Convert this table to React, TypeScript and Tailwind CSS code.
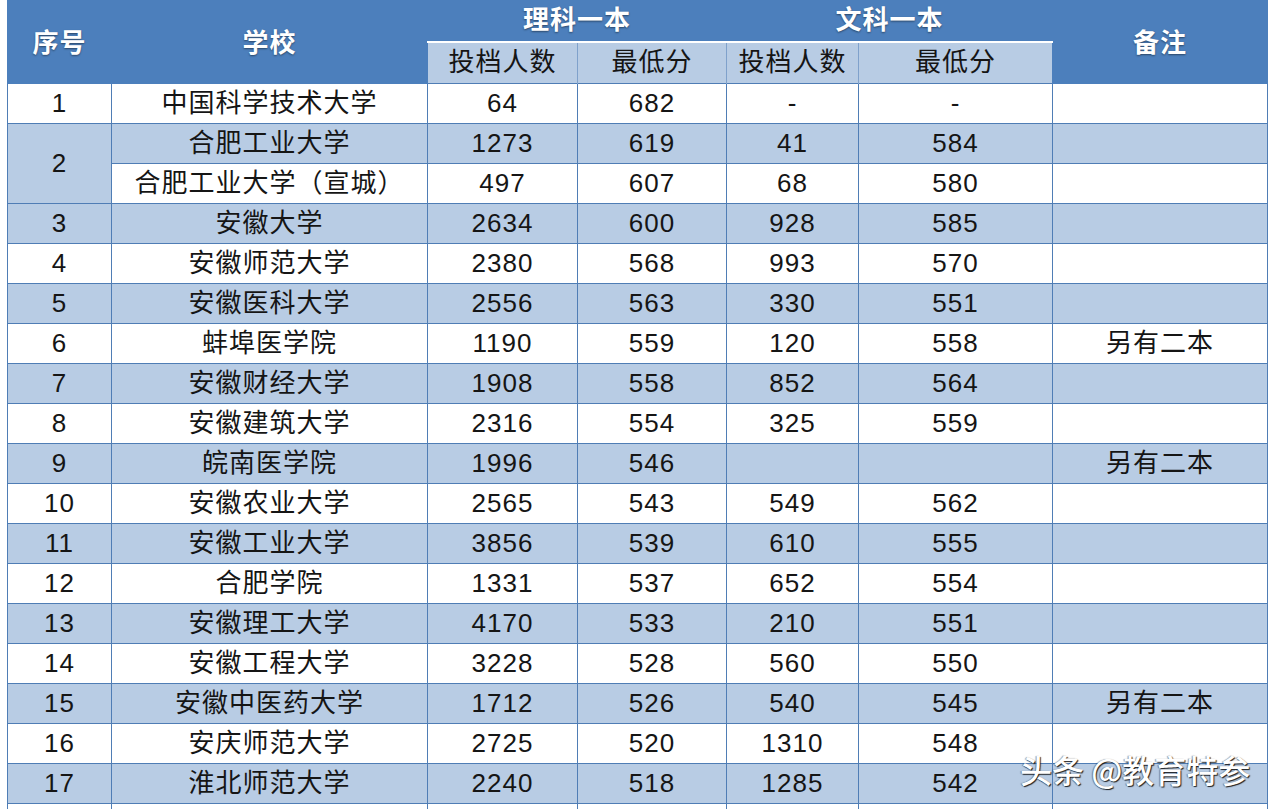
import React from 'react';

type Row = {
    no: string;
    name: string;
    a: string;
    b: string;
    c: string;
    d: string;
    note: string;
    span?: number;
    skipNo?: boolean;
};

const rows: Row[] = [
    { no: '1', name: '中国科学技术大学', a: '64', b: '682', c: '-', d: '-', note: '' },
    { no: '2', name: '合肥工业大学', a: '1273', b: '619', c: '41', d: '584', note: '', span: 2 },
    { no: '', name: '合肥工业大学（宣城）', a: '497', b: '607', c: '68', d: '580', note: '', skipNo: true },
    { no: '3', name: '安徽大学', a: '2634', b: '600', c: '928', d: '585', note: '' },
    { no: '4', name: '安徽师范大学', a: '2380', b: '568', c: '993', d: '570', note: '' },
    { no: '5', name: '安徽医科大学', a: '2556', b: '563', c: '330', d: '551', note: '' },
    { no: '6', name: '蚌埠医学院', a: '1190', b: '559', c: '120', d: '558', note: '另有二本' },
    { no: '7', name: '安徽财经大学', a: '1908', b: '558', c: '852', d: '564', note: '' },
    { no: '8', name: '安徽建筑大学', a: '2316', b: '554', c: '325', d: '559', note: '' },
    { no: '9', name: '皖南医学院', a: '1996', b: '546', c: '', d: '', note: '另有二本' },
    { no: '10', name: '安徽农业大学', a: '2565', b: '543', c: '549', d: '562', note: '' },
    { no: '11', name: '安徽工业大学', a: '3856', b: '539', c: '610', d: '555', note: '' },
    { no: '12', name: '合肥学院', a: '1331', b: '537', c: '652', d: '554', note: '' },
    { no: '13', name: '安徽理工大学', a: '4170', b: '533', c: '210', d: '551', note: '' },
    { no: '14', name: '安徽工程大学', a: '3228', b: '528', c: '560', d: '550', note: '' },
    { no: '15', name: '安徽中医药大学', a: '1712', b: '526', c: '540', d: '545', note: '另有二本' },
    { no: '16', name: '安庆师范大学', a: '2725', b: '520', c: '1310', d: '548', note: '' },
    { no: '17', name: '淮北师范大学', a: '2240', b: '518', c: '1285', d: '542', note: '' },
    { no: '18', name: '合肥师范学院', a: '1810', b: '515', c: '1102', d: '540', note: '另有二本' },
];

const td = 'border border-[#4f7db5] text-center align-middle p-0';

export default function App() {
    return (
        <div className="relative min-h-screen bg-white pl-[7px] font-['Liberation_Sans','Noto_Sans_CJK_SC',sans-serif] text-[26px] tracking-[1px] text-[#151515]">
            <table className="table-fixed border-collapse w-[1260px]">
                <colgroup>
                    <col className="w-[104px]" />
                    <col className="w-[316px]" />
                    <col className="w-[150px]" />
                    <col className="w-[149px]" />
                    <col className="w-[132px]" />
                    <col className="w-[194px]" />
                    <col className="w-[215px]" />
                </colgroup>
                <thead className="font-bold text-white [text-shadow:0_1px_2px_rgba(0,0,0,0.45)]">
                    <tr className="h-[41px] bg-[#4c7fbc]">
                        <th rowSpan={2} className="border border-[#4c7fbc] font-bold pt-[2px]">序号</th>
                        <th rowSpan={2} className="border border-[#4c7fbc] font-bold pt-[2px]">学校</th>
                        <th colSpan={2} className="border border-[#4c7fbc] font-bold">理科一本</th>
                        <th colSpan={2} className="border border-[#4c7fbc] font-bold">文科一本</th>
                        <th rowSpan={2} className="border border-[#4c7fbc] font-bold pt-[2px]">备注</th>
                    </tr>
                    <tr className="h-[42px] bg-[#b8cce4] text-[#151515] font-normal [text-shadow:none]">
                        <th className="border-t-2 border-t-white border-x border-[#7fa1cb] font-normal">投档人数</th>
                        <th className="border-t-2 border-t-white border-x border-[#7fa1cb] font-normal">最低分</th>
                        <th className="border-t-2 border-t-white border-x border-[#7fa1cb] font-normal">投档人数</th>
                        <th className="border-t-2 border-t-white border-x border-[#7fa1cb] font-normal">最低分</th>
                    </tr>
                </thead>
                <tbody>
                    {rows.map((r, i) => {
                        const bg = i % 2 === 1 ? 'bg-[#b8cce4]' : 'bg-white';
                        return (
                            <tr key={i} className={`h-[40px] ${bg}`}>
                                {!r.skipNo && (
                                    <td rowSpan={r.span} className={`${td} ${r.span ? 'bg-[#b8cce4]' : ''}`}>
                                        {r.no}
                                    </td>
                                )}
                                <td className={td}>{r.name}</td>
                                <td className={td}>{r.a}</td>
                                <td className={td}>{r.b}</td>
                                <td className={td}>{r.c}</td>
                                <td className={td}>{r.d}</td>
                                <td className={td}>{r.note}</td>
                            </tr>
                        );
                    })}
                </tbody>
            </table>
            <div className="absolute left-[1020px] top-[745px] text-[32px] tracking-[0px] font-medium text-white font-['Noto_Sans_CJK_SC',sans-serif] [text-shadow:1px_1px_1px_rgba(0,0,0,0.85),-1px_0_1px_rgba(0,0,0,0.4)]">
                头条 @教育特参
            </div>
        </div>
    );
}
